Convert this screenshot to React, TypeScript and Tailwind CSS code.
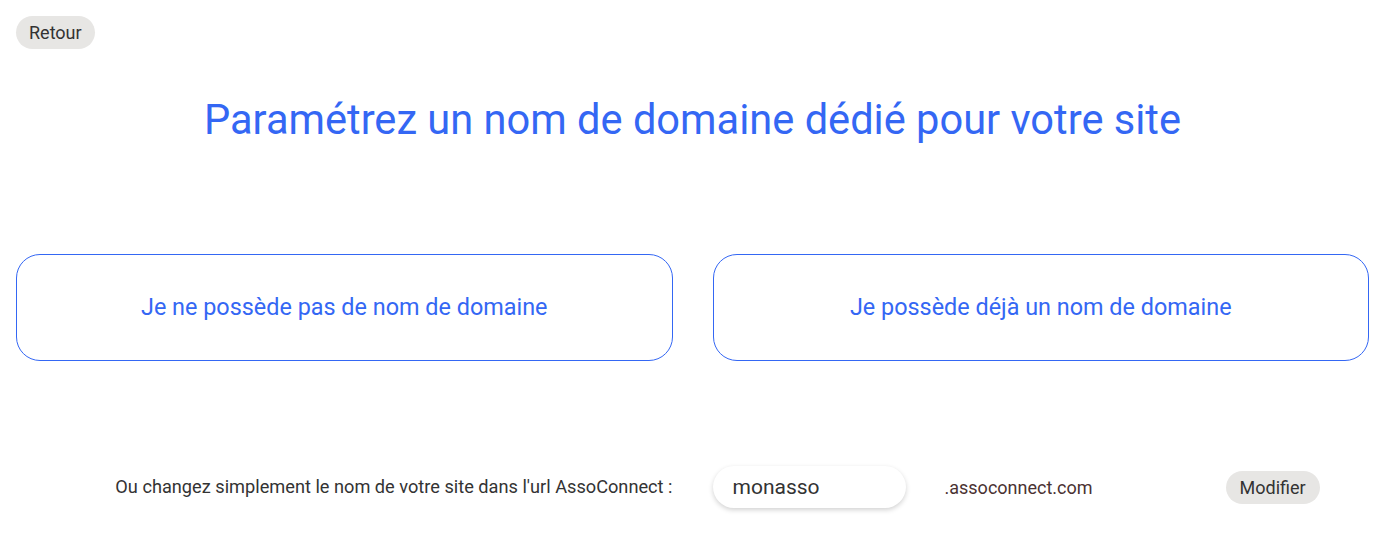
export default function App() {
  return (
    <div className="min-h-[544px] bg-white pl-4 pr-[14px] pt-4 font-['Roboto',sans-serif] text-[18px] text-[#333]">
      <button
        type="button"
        className="h-[33px] rounded-full bg-[#e7e6e4] px-[13px] text-[18px] text-[#333]"
      >
        Retour
      </button>

      <h1 className="mt-[47px] text-center text-[41.6px] leading-[48px] text-[#3467f4]">
        Paramétrez un nom de domaine dédié pour votre site
      </h1>

      <div className="mt-[110px] grid grid-cols-2 gap-10">
        <button
          type="button"
          className="h-[107px] rounded-[24px] border border-[#3467f4] text-[23.4px] text-[#3467f4]"
        >
          Je ne possède pas de nom de domaine
        </button>
        <button
          type="button"
          className="h-[107px] rounded-[24px] border border-[#3467f4] text-[23.4px] text-[#3467f4]"
        >
          Je possède déjà un nom de domaine
        </button>
      </div>

      <div className="mt-[105px] grid grid-cols-2 items-center gap-10">
        <p className="text-right text-[18.2px]">
          Ou changez simplement le nom de votre site dans l'url AssoConnect :
        </p>
        <div className="flex items-center">
          <input
            defaultValue="monasso"
            className="h-[42px] w-[193px] rounded-full bg-white px-5 text-[21px] text-[#333] shadow-[0_2px_5px_rgba(0,0,0,0.18)] outline-none"
          />
          <span className="ml-[39px] text-[#4a3232]">.assoconnect.com</span>
          <button
            type="button"
            className="ml-[133px] h-[33px] rounded-full bg-[#e7e6e4] px-[14px] text-[18px] text-[#333]"
          >
            Modifier
          </button>
        </div>
      </div>
    </div>
  )
}
